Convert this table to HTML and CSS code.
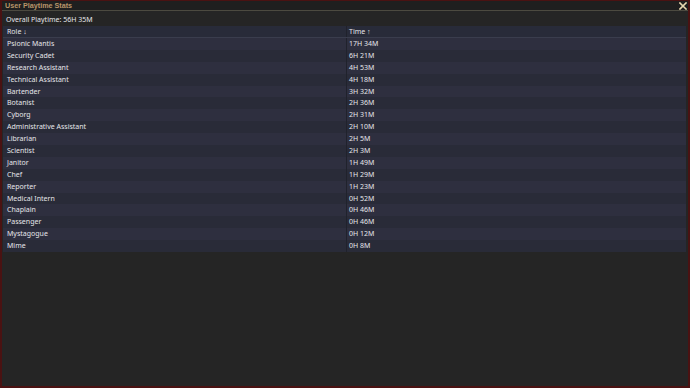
FILE: index.html
```html
<!DOCTYPE html>
<html>
<head>
<meta charset="utf-8">
<link rel="stylesheet" href="styles.css">
</head>
<body>
<div class="window">
  <div class="titlebar">
    <span class="title">User Playtime Stats</span>
    <svg class="close" width="8" height="8" viewBox="0 0 8 8"><path d="M1 1 L7 7 M7 1 L1 7" stroke="#e8d8b0" stroke-width="1.6" stroke-linecap="square"/></svg>
  </div>
  <div class="content">
    <div class="overall">Overall Playtime: 56H 35M</div>
    <div class="table">
      <div class="row head"><div class="cell">Role ↓</div><div class="cell">Time ↑</div></div>
      <div class="row"><div class="cell">Psionic Mantis</div><div class="cell">17H 34M</div></div>
      <div class="row"><div class="cell">Security Cadet</div><div class="cell">6H 21M</div></div>
      <div class="row"><div class="cell">Research Assistant</div><div class="cell">4H 53M</div></div>
      <div class="row"><div class="cell">Technical Assistant</div><div class="cell">4H 18M</div></div>
      <div class="row"><div class="cell">Bartender</div><div class="cell">3H 32M</div></div>
      <div class="row"><div class="cell">Botanist</div><div class="cell">2H 36M</div></div>
      <div class="row"><div class="cell">Cyborg</div><div class="cell">2H 31M</div></div>
      <div class="row"><div class="cell">Administrative Assistant</div><div class="cell">2H 10M</div></div>
      <div class="row"><div class="cell">Librarian</div><div class="cell">2H 5M</div></div>
      <div class="row"><div class="cell">Scientist</div><div class="cell">2H 3M</div></div>
      <div class="row"><div class="cell">Janitor</div><div class="cell">1H 49M</div></div>
      <div class="row"><div class="cell">Chef</div><div class="cell">1H 29M</div></div>
      <div class="row"><div class="cell">Reporter</div><div class="cell">1H 23M</div></div>
      <div class="row"><div class="cell">Medical Intern</div><div class="cell">0H 52M</div></div>
      <div class="row"><div class="cell">Chaplain</div><div class="cell">0H 46M</div></div>
      <div class="row"><div class="cell">Passenger</div><div class="cell">0H 46M</div></div>
      <div class="row"><div class="cell">Mystagogue</div><div class="cell">0H 12M</div></div>
      <div class="row"><div class="cell">Mime</div><div class="cell">0H 8M</div></div>
    </div>
  </div>
</div>
</body>
</html>
```
FILE: styles.css
```css
html, body {
  margin: 0;
  padding: 0;
  background: #3a0c0c;
}
body {
  width: 690px;
  height: 388px;
  overflow: hidden;
  font-family: "Noto Sans", "Open Sans", sans-serif;
  font-size: 7px;
  color: #e6e6ea;
}
.window {
  box-sizing: border-box;
  width: 690px;
  height: 388px;
  border: 2px solid #4a1212;
  border-top-width: 1px;
  background: #252525;
  display: flex;
  flex-direction: column;
}
.titlebar {
  height: 9px;
  display: flex;
  align-items: center;
  justify-content: space-between;
  padding: 0 1px 0 3px;
  background: #1f1f1f;
  border-bottom: 1px solid #4c4a40;
}
.title {
  font-family: "Liberation Sans", sans-serif;
  font-weight: bold;
  font-size: 7.2px;
  color: #b8956a;
}
.close {
  display: block;
}
.content {
  padding: 2px 2px 0 1px;
  display: flex;
  flex-direction: column;
}
.overall {
  height: 13px;
  line-height: 13px;
  padding-left: 3px;
}
.table {
  display: flex;
  flex-direction: column;
}
.row {
  display: grid;
  grid-template-columns: 343px 1fr;
  height: 11.9px;
  line-height: 11.9px;
  background: #2e2f3f;
}
.row:nth-child(odd) {
  background: #292b38;
}
.row.head {
  height: 11px;
  line-height: 11px;
  background: #282b39;
  border-bottom: 1px solid #3a3d4d;
}
.cell {
  padding-left: 4px;
  white-space: nowrap;
}
.cell + .cell {
  border-left: 1px solid #20222c;
  padding-left: 2px;
}
```
